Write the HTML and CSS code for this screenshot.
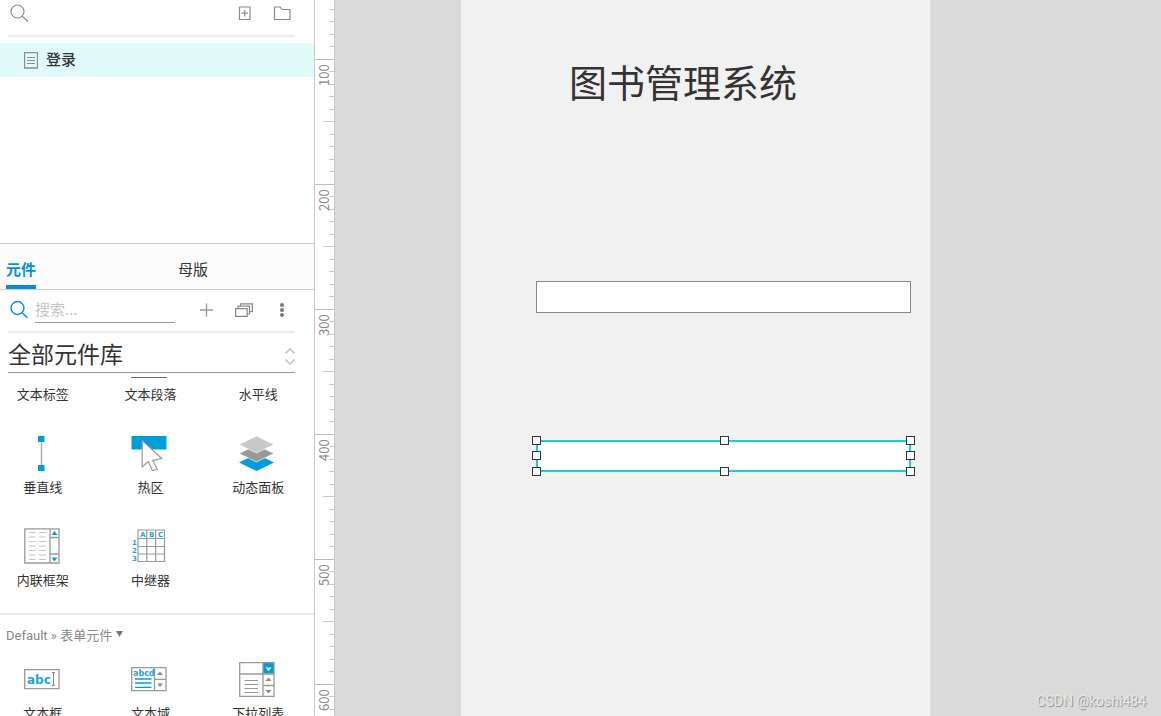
FILE: index.html
```html
<!DOCTYPE html>
<html lang="zh-CN">
<head>
<meta charset="utf-8">
<title>图书管理系统</title>
<link rel="stylesheet" href="styles.css">
</head>
<body>
<div class="app">
  <aside class="sidebar">
    <section class="outline">
      <div class="outline-tools">
        <button class="icon-btn" aria-label="搜索页面">
          <svg width="20" height="20" viewBox="0 0 20 20" fill="none" stroke="#8c8c8c" stroke-width="1.2"><circle cx="7.500" cy="8.5" r="6.5"/><path d="M12 13l6 5.500"/></svg>
        </button>
        <span class="spacer"></span>
        <button class="icon-btn" aria-label="添加页面">
          <svg width="18" height="18" viewBox="0 0 18 18" fill="none" stroke="#8c8c8c" stroke-width="1.2"><path d="M4.500 3h10.500v12.500h-10.500zM6.500 9.200h6.500M9.750 6v6.500"/></svg>
        </button>
        <button class="icon-btn" aria-label="添加文件夹">
          <svg width="18" height="18" viewBox="0 0 18 18" fill="none" stroke="#8c8c8c" stroke-width="1.2"><path d="M1.500 3h5.500l2 2.500h8v10h-15.500z"/></svg>
        </button>
      </div>
      <button class="tree-item">
        <svg width="14" height="17" viewBox="0 0 14 17" fill="none" stroke="#8c8c8c"><path d="M.5.500h13v15.500h-13z" stroke-width="1.300"/><path d="M3 5.500h8M3 8.500h8M3 11.500h8"/></svg>
        <span>登录</span>
      </button>
    </section>

    <nav class="tabs">
      <button class="tab tab-active">元件</button>
      <button class="tab">母版</button>
    </nav>

    <div class="search-row">
      <label class="search-icon" for="search" aria-label="搜索">
        <svg width="20" height="20" viewBox="0 0 20 20" fill="none" stroke="#008fe0" stroke-width="1.400"><circle cx="7.500" cy="8" r="6.500"/><path d="M12 12.500l5.500 5.500"/></svg>
      </label>
      <input class="search-input" id="search" type="text" placeholder="搜索...">
      <div class="search-actions">
        <button class="icon-btn" aria-label="添加元件库">
          <svg width="18" height="18" viewBox="0 0 18 18" fill="none" stroke="#999" stroke-width="1.300"><path d="M3 9h13M9.500 2.500v13"/></svg>
        </button>
        <button class="icon-btn" aria-label="元件库列表">
          <svg width="18" height="18" viewBox="0 0 18 18" fill="none" stroke="#888" stroke-width="1.200"><path d="M.6 7.600h11.500v7.800h-11.500zM3 7.600v-2.400h11.500v7.800h-2.400M5.500 5.200v-2.400h11.900v7.800h-2.900"/></svg>
        </button>
        <button class="icon-btn" aria-label="更多选项">
          <svg width="18" height="18" viewBox="0 0 18 18" fill="#777"><circle cx="9" cy="4" r="2"/><circle cx="9" cy="9" r="2"/><circle cx="9" cy="14" r="2"/></svg>
        </button>
      </div>
    </div>

    <div class="library">
      <select class="library-select" aria-label="元件库"><option>全部元件库</option></select>
      <svg class="library-arrows" width="10" height="17" viewBox="0 0 10 17" fill="none" stroke="#c4c4c4" stroke-width="1.600"><path d="M.5 5.500l4.500-4.500 4.500 4.500M.5 11.500l4.500 4.500 4.500-4.500"/></svg>
    </div>

    <div class="widgets">
      <div class="widget-grid">
        <div class="widget"><span class="icon-clipped"></span><span>文本标签</span></div>
        <div class="widget">
          <svg class="icon-clipped" width="36" height="5" viewBox="0 0 36 5"><path d="M0 4.500h36" stroke="#666"/></svg>
          <span>文本段落</span>
        </div>
        <div class="widget"><span class="icon-clipped"></span><span>水平线</span></div>

        <div class="widget">
          <svg width="36" height="36" viewBox="0 0 36 36"><path d="M17.500 5v26" stroke="#aaa" stroke-width="1.500"/><path d="M14 1h6.500v6h-6.500zM14 30h6.500v6h-6.500z" fill="#009ddc"/></svg>
          <span>垂直线</span>
        </div>
        <div class="widget">
          <svg width="36" height="36" viewBox="0 0 36 36"><path d="M.5 1h35v13.500h-35z" fill="#009ddc"/><path d="M11.200 5.500v26.500l6-5.500 4.500 9.500 4.500-2-4.500-8.500 9-2z" fill="#fff" stroke="#999" stroke-width="1.200"/></svg>
          <span>热区</span>
        </div>
        <div class="widget">
          <svg width="36" height="36" viewBox="0 0 36 36"><path d="M0 27.500l17.500-8.500 17.500 8.500-17.500 8.500z" fill="#009ddc"/><path d="M0 18.500l17.500-8.500 17.500 8.500-17.500 8.500z" fill="#999" stroke="#fff" stroke-width=".6"/><path d="M0 9.500l17.500-8.500 17.500 8.500-17.500 8.500z" fill="#c8c8c8" stroke="#fff" stroke-width=".6"/></svg>
          <span>动态面板</span>
        </div>

        <div class="widget">
          <svg width="36" height="36" viewBox="0 0 36 36" fill="none"><path d="M.8.800h34.200v34.200h-34.200zM26 .8v34.200M26 9.500h9M26 26h9" stroke="#999" stroke-width="1.300"/><path d="M5 4.500h6.500M15 4.500h7M5 9h6.500M15 9h7M5 13.500h6.500M15 13.500h7M5 18h6.500M15 18h7M5 22.500h6.500M15 22.500h7M5 27h6.500M15 27h7M5 31.500h6.500M15 31.500h7" stroke="#c4c4c4"/><path d="M27.500 7l3-4 3 4zM27.500 29.500l3 4 3-4z" fill="#009ddc"/></svg>
          <span>内联框架</span>
        </div>
        <div class="widget">
          <svg width="36" height="36" viewBox="0 0 36 36"><path d="M7 2h26.500v31.500h-26.500zM15.800 2v31.500M24.600 2v31.500M7 10.500h26.500M7 18.500h26.500M7 26h26.500" fill="none" stroke="#999" stroke-width="1.200"/><g class="icon-text icon-text-tiny"><text x="9" y="9">A</text><text x="18" y="9">B</text><text x="27" y="9">C</text><text x="1" y="17">1</text><text x="1" y="25">2</text><text x="1" y="33">3</text></g></svg>
          <span>中继器</span>
        </div>
      </div>

      <button class="group-title">Default » 表单元件 <svg width="7" height="8" viewBox="0 0 7 8"><path d="M0 1h7l-3.500 6z" fill="#777"/></svg></button>

      <div class="widget-grid">
        <div class="widget">
          <svg width="36" height="36" viewBox="0 0 36 36"><path d="M.7 8.700h34.300v19h-34.300z" fill="none" stroke="#999" stroke-width="1.300"/><text class="icon-text" x="3" y="23">abc</text><path d="M28 11.500h3M28 24.500h3M29.500 11.500v13" stroke="#888"/></svg>
          <span>文本框</span>
        </div>
        <div class="widget">
          <svg width="36" height="36" viewBox="0 0 36 36"><path d="M.7 6.700h34.300v23h-34.300zM23.500 6.700v23M23.500 18.300h11.500" fill="none" stroke="#999" stroke-width="1.300"/><text class="icon-text icon-text-small" x="2" y="15">abcd</text><path d="M4 18h16.500M4 22h16.500M4 26.300h16.500" stroke="#009ddc" stroke-width="1.300"/><path d="M26 14l3-3.500 3 3.500zM26 22.500l3 3.500 3-3.500z" fill="#888"/></svg>
          <span>文本域</span>
        </div>
        <div class="widget">
          <svg width="36" height="36" viewBox="0 0 36 36"><path d="M24 1.500h11v11h-11z" fill="#009ddc"/><path d="M.7 1.700h34.300v33.600h-34.300zM.7 13h34.300M24 1.700v33.600M24 24.500h11" fill="none" stroke="#999" stroke-width="1.300"/><path d="M5.500 19.500h13.500M5.500 23.500h13.500M5.500 27.500h13.500M5.500 31.500h13.500" stroke="#999"/><path d="M26.500 6.500l3 3.500 3-3.500z" fill="#fff"/><path d="M26.500 20l3-3.500 3 3.500zM26.500 29l3 3.500 3-3.500z" fill="#888"/></svg>
          <span>下拉列表</span>
        </div>
      </div>
    </div>
  </aside>

  <svg class="ruler" aria-hidden="true">
    <defs>
      <pattern id="ticks" y="59" width="20" height="125" patternUnits="userSpaceOnUse">
        <path d="M0 .5h19" stroke="#bbb"/>
        <path d="M14 12.500h5M14 25.500h5M14 37.500h5M14 50.500h5M8 62.500h11M14 75.500h5M14 87.500h5M14 100.500h5M14 112.500h5" stroke="#c8c8c8"/>
      </pattern>
    </defs>
    <rect width="20" height="100%" fill="url(#ticks)"/>
    <text transform="translate(14 86) rotate(-90)">100</text>
    <text transform="translate(14 211) rotate(-90)">200</text>
    <text transform="translate(14 336) rotate(-90)">300</text>
    <text transform="translate(14 461) rotate(-90)">400</text>
    <text transform="translate(14 586) rotate(-90)">500</text>
    <text transform="translate(14 711) rotate(-90)">600</text>
  </svg>

  <main class="canvas">
    <div class="page">
      <h1 class="page-title">图书管理系统</h1>
      <input class="field field-user" type="text" aria-label="用户名">
      <div class="selection">
        <input class="field field-selected" type="text" aria-label="密码">
        <i class="handle top left"></i><i class="handle top center"></i><i class="handle top right"></i>
        <i class="handle middle left"></i><i class="handle middle right"></i>
        <i class="handle bottom left"></i><i class="handle bottom center"></i><i class="handle bottom right"></i>
      </div>
    </div>
    <span class="watermark">CSDN @koshi484</span>
  </main>
</div>
</body>
</html>
```

FILE: styles.css
```css
* {
  box-sizing: border-box;
}

body {
  margin: 0;
  color: #333;
  font-family: "Noto Sans CJK SC", sans-serif;
  font-size: 13px;
}

button,
input,
select {
  margin: 0;
  padding: 0;
  border: 0;
  border-radius: 0;
  background: none;
  color: inherit;
  font: inherit;
}

svg {
  display: block;
  flex: none;
}

.app {
  display: flex;
  height: 100vh;
  overflow: hidden;
}

.sidebar {
  display: flex;
  flex: none;
  flex-direction: column;
  width: 315px;
  border-right: 1px solid #c8c8c8;
  background: #fff;
}

.spacer {
  flex: 1;
}

.icon-btn {
  display: flex;
}

/* Page outline */
.outline {
  flex: none;
  height: 244px;
  border-bottom: 1px solid #ccc;
}

.outline-tools {
  display: flex;
  align-items: center;
  gap: 20px;
  height: 37px;
  margin: 0 19px 6px 8px;
  padding: 0 4px 10px 2px;
  border-bottom: 2px solid #ececec;
}

.tree-item {
  display: flex;
  align-items: center;
  gap: 8px;
  width: 100%;
  height: 34px;
  padding-left: 24px;
  background: #e0fafa;
  font-size: 15px;
  font-weight: 500;
}

.tree-item span {
  padding-bottom: 4px;
}

/* Library tabs */
.tabs {
  display: grid;
  flex: none;
  grid-template-columns: 1fr 1fr;
  column-gap: 36px;
  height: 46px;
  padding-left: 6px;
  border-bottom: 1px solid #ccc;
  background: #fcfcfc;
  font-size: 15px;
}

.tab {
  justify-self: start;
  padding-top: 8px;
  border-bottom: 4px solid transparent;
}

.tab-active {
  border-bottom-color: #008fe0;
  color: #008fe0;
  font-weight: 700;
}

.search-row {
  display: flex;
  flex: none;
  align-items: center;
  gap: 5px;
  height: 43px;
  margin: 0 19px 0 8px;
  padding: 0 4px 2px 2px;
  border-bottom: 2px solid #ececec;
}

.search-input {
  width: 140px;
  height: 26px;
  padding-bottom: 2px;
  border-bottom: 1px solid #999;
  font-size: 15px;
  outline: 0;
}

.search-input::placeholder {
  color: #c4c4c4;
}

.search-actions {
  display: flex;
  gap: 20px;
  margin-left: auto;
}

.library {
  display: grid;
  flex: none;
  align-items: center;
  height: 40px;
  margin: 0 19px 0 8px;
  border-bottom: 1px solid #999;
}

.library-select,
.library-arrows {
  grid-area: 1 / 1;
}

.library-select {
  width: 100%;
  appearance: none;
  font-size: 23px;
  line-height: 34px;
}

.library-arrows {
  justify-self: end;
  margin-top: 8px;
  pointer-events: none;
}

/* Widget list */
.widgets {
  flex: 1;
  min-height: 0;
  overflow: hidden;
}

.widget-grid {
  display: grid;
  grid-template-columns: repeat(3, 1fr);
  gap: 32px 22px;
  padding-right: 13px;
}

.widget {
  display: flex;
  flex-direction: column;
  align-items: center;
  gap: 7px;
  line-height: 18px;
}

.widget svg {
  margin-right: 2px;
}

.icon-clipped {
  height: 5px;
}

.icon-text {
  fill: #1ba5e0;
  font-family: "DejaVu Sans", sans-serif;
  font-size: 12px;
  font-weight: 700;
}

.icon-text-small {
  font-size: 8px;
}

.icon-text-tiny {
  font-size: 7px;
}

.group-title {
  display: flex;
  align-items: center;
  gap: 4px;
  width: 100%;
  height: 42px;
  margin: 24px 0 6px;
  padding: 0 0 2px 6px;
  border-top: 2px solid #ececec;
  color: #888;
  font-family: Roboto, "Noto Sans CJK SC", sans-serif;
}

/* Ruler */
.ruler {
  width: 20px;
  height: 100%;
  border-right: 1px solid #c8c8c8;
  background: #fff;
  fill: #888;
  font-size: 13px;
}

/* Canvas */
.canvas {
  position: relative;
  flex: 1;
  padding-left: 126px;
  background: #dadada;
}

.page {
  position: relative;
  width: 469px;
  height: 100%;
  background: #f1f1f1;
}

.page-title {
  position: absolute;
  top: 53px;
  left: 108px;
  margin: 0;
  font-size: 38px;
  font-weight: 400;
  line-height: 56px;
  white-space: nowrap;
}

.field {
  width: 375px;
  height: 32px;
  background: #fff;
  outline: 0;
}

.field-user {
  position: absolute;
  top: 281px;
  left: 75px;
  border: 1px solid #888;
}

.selection {
  position: absolute;
  top: 440px;
  left: 75px;
}

.field-selected {
  display: block;
  border: 2px solid #1bcfcf;
}

.handle {
  position: absolute;
  width: 9px;
  height: 9px;
  border: 1px solid #333;
  background: #fff;
}

.top {
  top: -4px;
}

.middle {
  top: 11px;
}

.bottom {
  bottom: -4px;
}

.left {
  left: -4px;
}

.center {
  left: 184px;
}

.right {
  right: -4px;
}

.watermark {
  position: absolute;
  right: 15px;
  bottom: 6px;
  color: #e8e8e8;
  font-family: Roboto, sans-serif;
  font-size: 14px;
  line-height: 18px;
  text-shadow: 1px 1px 1px #888;
}
```
